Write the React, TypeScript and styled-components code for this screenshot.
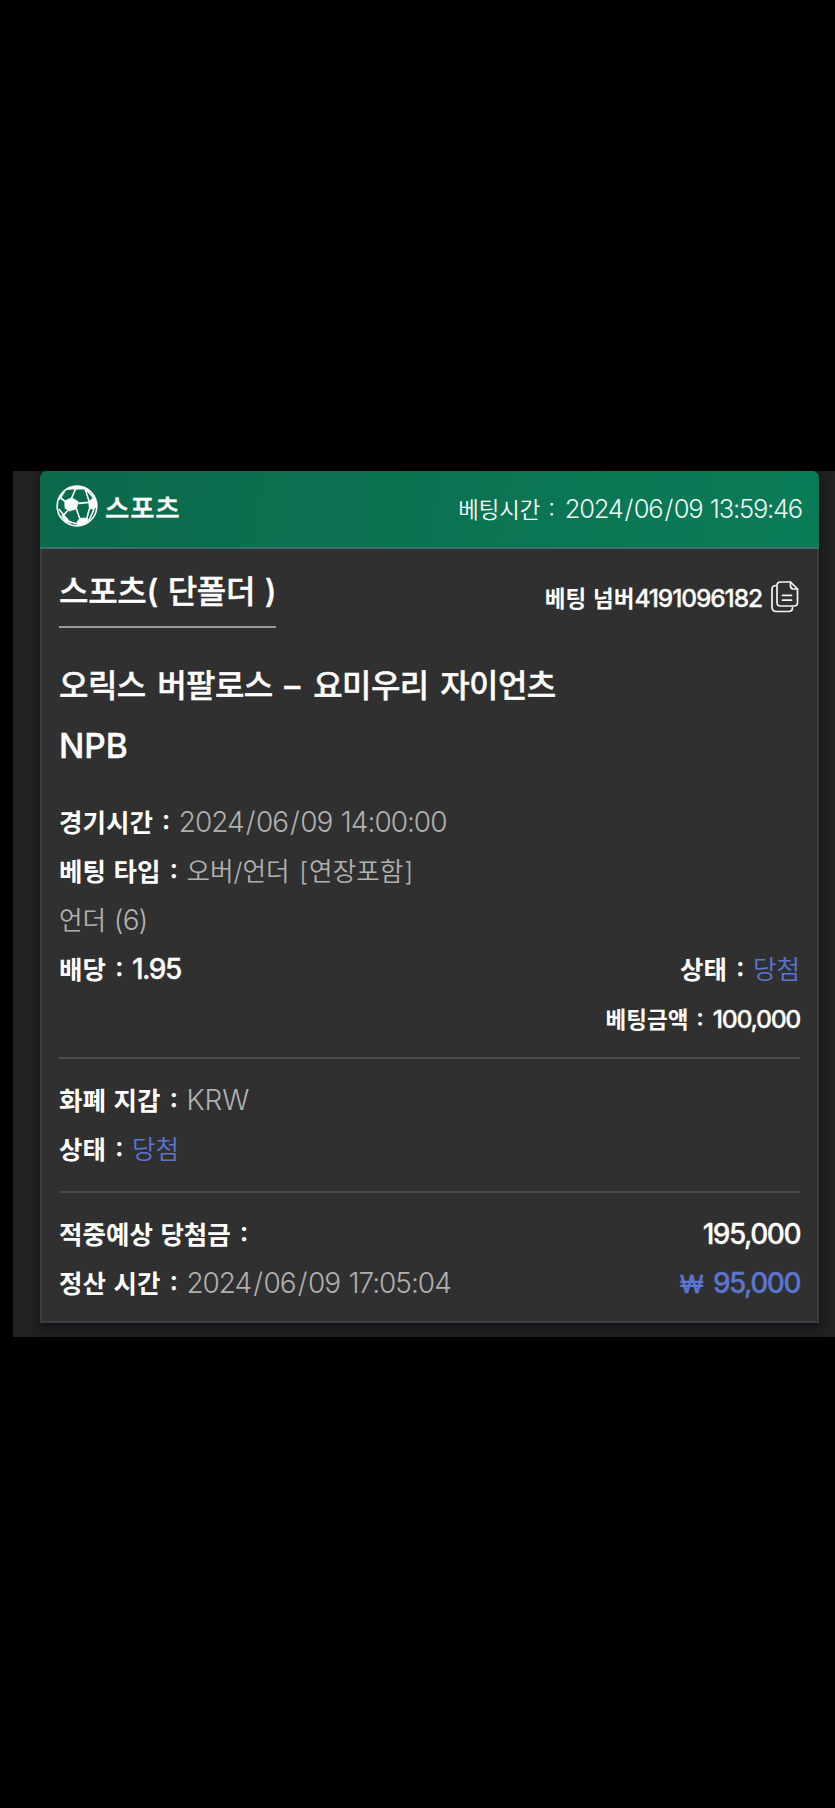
import React from "react";
import styled, { createGlobalStyle } from "styled-components";

const GlobalStyle = createGlobalStyle`
  * { box-sizing: border-box; }
  body { margin: 0; background: #000; }
`;

const Page = styled.main`
  min-height: 1808px;
  padding: 471px 0 0 13px;
  background: #000;
  color: #fff;
  font-family: Inter, "Noto Sans CJK KR", sans-serif;
  white-space: pre;
`;

const Panel = styled.section`
  height: 866px;
  padding: 0 16px 0 27px;
  background: #212122;
  overflow: hidden;
`;

const Card = styled.article`
  height: 852px;
  border-radius: 7px 7px 0 0;
  background: #303030;
  box-shadow: 0 4px 9px #111116;
`;

const CardHeader = styled.header`
  display: flex;
  justify-content: space-between;
  height: 77.5px;
  padding: 0 17px 0 16px;
  border-bottom: 2px solid #39716a;
  border-radius: 7px 7px 0 0;
  background: linear-gradient(100deg, #0b694c, #0a7c58);
`;

const Sport = styled.div`
  display: flex;
  padding-top: 14px;
  gap: 7px;
`;

const SportName = styled.span`
  font-size: 26.5px;
  font-weight: 500;
  line-height: 46px;
  letter-spacing: 0.8px;
  -webkit-text-stroke: 0.4px;
`;

const PlacedAt = styled.div`
  line-height: 75px;
  font-size: 25.5px;
  font-weight: 300;
`;

const CardBody = styled.div`
  height: 774.5px;
  padding: 2px 17px 0;
  border: 2px solid #3c3c41;
  border-top: 0;
`;

const TitleRow = styled.div`
  display: flex;
  justify-content: space-between;
  height: 78px;
`;

const Title = styled.h1`
  margin: 0;
  height: 77.5px;
  border-bottom: 2px solid #999;
  font-size: 32px;
  font-weight: 500;
  line-height: 82px;
  letter-spacing: -0.3px;
  word-spacing: 1.5px;
  -webkit-text-stroke: 0.4px;
`;

const BetNumber = styled.div`
  display: flex;
  gap: 9px;
  padding: 30px 1px 0 0;
  line-height: 34px;
`;

const Match = styled.h2`
  margin: 27px 0 0;
  font-size: 32px;
  font-weight: 500;
  line-height: 60px;
  letter-spacing: -0.55px;
  word-spacing: 3.5px;
  -webkit-text-stroke: 0.4px;
`;

const Dash = styled.span`
  margin-right: 2px;
`;

const League = styled.div`
  font-size: 33.5px;
  font-weight: 500;
  line-height: 60px;
  -webkit-text-stroke: 0.4px;
`;

const Group = styled.div<{ $top: number; $bottom: number }>`
  padding: ${(p) => p.$top}px 0 ${(p) => p.$bottom}px;
  & + & { border-top: 2px solid #4b4b4b; }
`;

const Row = styled.div<{ $end?: boolean }>`
  display: flex;
  align-items: baseline;
  justify-content: ${(p) => (p.$end ? "flex-end" : "space-between")};
  height: 49px;
  font-size: 28px;
  line-height: 49px;
`;

const Label = styled.span<{ $small?: boolean }>`
  font-size: ${(p) => (p.$small ? 22.5 : 25.5)}px;
  font-weight: 700;
  word-spacing: 1.5px;
`;

const LightLabel = styled.span`
  font-size: 22.3px;
  font-weight: 350;
`;

const Colon = styled.span<{ $small?: boolean }>`
  display: inline-block;
  width: ${(p) => (p.$small ? 24.5 : 26)}px;
  padding-left: ${(p) => (p.$small ? 8 : 9)}px;
  font-size: ${(p) => (p.$small ? 24 : 27)}px;
  font-feature-settings: "case";
`;

const StrongColon = styled(Colon)`
  font-weight: 600;
`;

const Value = styled.span<{ $win?: boolean }>`
  color: ${(p) => (p.$win ? "#5b75d0" : "#b0b0b0")};
  font-size: 25.6px;
  font-weight: 350;
  word-spacing: 1.5px;
`;

const Bracket = styled.span`
  margin: 0 1px;
`;

const Latin = styled.span<{ $header?: boolean; $digits?: boolean }>`
  color: ${(p) => (p.$header ? "#effaf6" : "#b0b0b0")};
  font-size: ${(p) => (p.$header ? 25.5 : 28)}px;
  font-weight: 330;
  letter-spacing: ${(p) => (p.$digits ? (p.$header ? -1.2 : -1) : 0)}px;
  word-spacing: ${(p) => (p.$digits ? 1.5 : 0)}px;
`;

const Option = styled(Latin)`
  margin-left: -1px;
  letter-spacing: -0.9px;
`;

const Slash = styled.span`
  margin: 0 1.5px 0 2px;
`;

const Amount = styled.span<{ $size: number; $win?: boolean }>`
  color: ${(p) => (p.$win ? "#5b75d0" : "#fff")};
  font-size: ${(p) => p.$size}px;
  font-weight: 500;
  letter-spacing: -0.054em;
  -webkit-text-stroke: 0.3px;
`;

const BetId = styled(Amount)`
  letter-spacing: -1.1px;
`;

const Won = styled.span`
  margin-right: 9px;
  font-size: 24.5px;
  letter-spacing: 0;
`;

function Stamp({ date, time, header }: { date: string; time: string; header?: boolean }) {
  return (
    <Latin $header={header} $digits>
      {date.split("/").map((part, i) => (
        <React.Fragment key={i}>
          {i > 0 && <Slash>/</Slash>}
          {part}
        </React.Fragment>
      ))}
      {" " + time}
    </Latin>
  );
}

const BallIcon = () => (
  <svg width="42" height="42" viewBox="-1 -1 126 126" fill="none" stroke="#fff" strokeWidth="4.8">
    <circle cx="62" cy="62" r="59.5" />
    <g fill="#fff" strokeWidth="2" strokeLinejoin="round">
      <path d="M25 47 46 37 66 49 60 71 39 77 26 69Z" />
      <path d="M97 50 112 35 121 52 121 64 113 72 99 70Z" />
      <path d="M70 99 92 98 98 105 88 117 64 121 60 114Z" />
      <path d="M34 9 56 3 87 8 86 11 57 12 47 11 34 13Z" />
      <path d="M8 38 18 24 25 20 14 37 8 44Z" />
      <path d="M16 91 22 87 38 106 44 114 26 108Z" />
    </g>
    <path d="M46 38 57 12M66 54 98 51M60 70 70 99M34 76 22 89M25 47 13 38M86 10 99 50M22 89 8 72M99 70 92 98M36 108 60 115M87 10 112 37M113 72 98 105" />
  </svg>
);

const CopyIcon = () => (
  <svg width="28" height="32" viewBox="0 0 28 32" fill="none" stroke="#f4f4f4" strokeWidth="1.7" strokeLinecap="round" strokeLinejoin="round">
    <path d="M9.5 1H19.5L26.5 8V21.5Q26.5 25 23 25H9.5Q6 25 6 21.5V4.5Q6 1 9.5 1Z" />
    <path d="M19.5 1V5Q19.5 8 22.5 8H26.5" />
    <path d="M5 4.5Q1 4.5 1 8.5V26Q1 30.5 5.5 30.5H17.5Q21.5 30.5 21.5 26.5" />
    <path d="M11.5 14.4H20.5M11.5 19.2H20.5" />
  </svg>
);

export default function App() {
  return (
    <Page>
      <GlobalStyle />
      <Panel>
        <Card>
          <CardHeader>
            <Sport>
              <BallIcon />
              <SportName>스포츠</SportName>
            </Sport>
            <PlacedAt>
              <LightLabel>베팅시간</LightLabel>
              <Colon $small>:</Colon>
              <Stamp header date="2024/06/09" time="13:59:46" />
            </PlacedAt>
          </CardHeader>
          <CardBody>
            <TitleRow>
              <Title>스포츠( 단폴더 )</Title>
              <BetNumber>
                <span>
                  <Label $small>베팅 넘버</Label>
                  <BetId $size={24.5}>4191096182</BetId>
                </span>
                <CopyIcon />
              </BetNumber>
            </TitleRow>
            <Match>오릭스 버팔로스 <Dash>–</Dash> 요미우리 자이언츠</Match>
            <League>NPB</League>
            <Group $top={22} $bottom={14}>
              <Row>
                <span><Label>경기시간</Label><StrongColon>:</StrongColon><Stamp date="2024/06/09" time="14:00:00" /></span>
              </Row>
              <Row>
                <span><Label>베팅 타입</Label><StrongColon>:</StrongColon><Value>오버/언더 <Bracket>[</Bracket>연장포함<Bracket>]</Bracket></Value></span>
              </Row>
              <Row>
                <span><Value>언더 </Value><Option>(6)</Option></span>
              </Row>
              <Row>
                <span><Label>배당</Label><StrongColon>:</StrongColon><Amount $size={28}>1.95</Amount></span>
                <span><Label>상태</Label><StrongColon>:</StrongColon><Value $win>당첨</Value></span>
              </Row>
              <Row $end>
                <span><Label $small>베팅금액</Label><StrongColon $small>:</StrongColon><Amount $size={24.8}>100,000</Amount></span>
              </Row>
            </Group>
            <Group $top={17} $bottom={17}>
              <Row>
                <span><Label>화폐 지갑</Label><StrongColon>:</StrongColon><Latin>KRW</Latin></span>
              </Row>
              <Row>
                <span><Label>상태</Label><StrongColon>:</StrongColon><Value $win>당첨</Value></span>
              </Row>
            </Group>
            <Group $top={17} $bottom={0}>
              <Row>
                <span><Label>적중예상 당첨금</Label><StrongColon>:</StrongColon></span>
                <Amount $size={28}>195,000</Amount>
              </Row>
              <Row>
                <span><Label>정산 시간</Label><StrongColon>:</StrongColon><Stamp date="2024/06/09" time="17:05:04" /></span>
                <Amount $size={28} $win><Won>₩</Won>95,000</Amount>
              </Row>
            </Group>
          </CardBody>
        </Card>
      </Panel>
    </Page>
  );
}
